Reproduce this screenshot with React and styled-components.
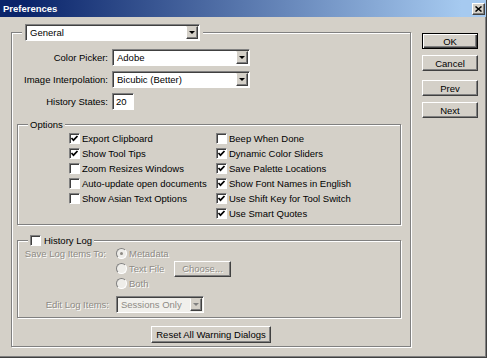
import React from 'react';
import styled, { createGlobalStyle, css } from 'styled-components';

const GlobalStyle = createGlobalStyle`
  html, body {
    margin: 0;
    padding: 0;
    background: #d4d0c8;
  }
  body {
    font-family: "Liberation Sans", Arial, sans-serif;
    font-size: 9.5px;
    color: #000;
  }
`;

const disabledText = css`
  color: #8e8b85;
  text-shadow: 1px 1px 0 #fff;
`;

const Window = styled.div`
  width: 487px;
  height: 358px;
  box-sizing: border-box;
  display: flex;
  flex-direction: column;
  background: #d4d0c8;
  border-right: 1px solid #404040;
  border-bottom: 1px solid #404040;
  box-shadow: inset -1px -1px #808080;
`;

const TitleBar = styled.div`
  height: 17px;
  flex: none;
  display: flex;
  align-items: center;
  justify-content: space-between;
  padding: 0 1px 0 3px;
  background: linear-gradient(to right, #0a246a 5%, #a6caf0 95%);
  color: #fff;
  font-weight: bold;
`;

const CloseButton = styled.div`
  width: 13px;
  height: 12px;
  box-sizing: border-box;
  display: flex;
  align-items: center;
  justify-content: center;
  background: #d4d0c8;
  border: 1px solid;
  border-color: #fff #404040 #404040 #fff;
  box-shadow: inset -1px -1px #808080;
`;

const Body = styled.div`
  display: flex;
  align-items: flex-start;
  padding: 15px 0 0 11px;
`;

const Group = styled.div`
  display: flex;
  flex-direction: column;
  box-sizing: border-box;
  border: 1px solid #808080;
  box-shadow: inset 1px 1px #fff, 1px 1px #fff;
  width: ${p => (p.$w ? `${p.$w}px` : 'auto')};
  margin: ${p => p.$margin || 0};
  padding-bottom: ${p => p.$pb || 0}px;
`;

const Legend = styled.div`
  align-self: flex-start;
  display: flex;
  align-items: center;
  gap: 3px;
  margin: ${p => p.$top}px 0 0 10px;
  padding: 0 ${p => p.$pad}px;
  line-height: 13px;
  background: #d4d0c8;
`;

const FormGrid = styled.div`
  display: grid;
  grid-template-columns: 100px auto;
  grid-auto-rows: 17px;
  row-gap: 5px;
  align-items: center;
  margin-top: 8px;
`;

const FieldLabel = styled.div`
  text-align: right;
  padding-right: ${p => p.$pr ?? 4}px;
  line-height: ${p => p.$lh || 13}px;
  white-space: nowrap;
  ${p => p.$disabled && disabledText}
`;

const SelectBox = styled.div`
  display: flex;
  align-items: center;
  width: ${p => p.$w}px;
  height: 17px;
  box-sizing: border-box;
  border: 1px solid;
  border-color: #808080 #fff #fff #808080;
  box-shadow: inset 1px 1px #404040;
  background: ${p => (p.$disabled ? '#f1f0ec' : '#fff')};
  padding: 1px 1px 1px 4px;
`;

const SelectText = styled.span`
  flex: 1;
  white-space: nowrap;
  ${p => p.$disabled && css`color: #8e8b85;`}
`;

const DropButton = styled.div`
  width: 12px;
  height: 13px;
  box-sizing: border-box;
  display: flex;
  align-items: center;
  justify-content: center;
  background: #d4d0c8;
  border: 1px solid;
  border-color: #d4d0c8 #404040 #404040 #fff;
  box-shadow: inset -1px -1px #808080;
`;

const Arrow = styled.span`
  width: 0;
  height: 0;
  border-left: 3px solid transparent;
  border-right: 3px solid transparent;
  border-top: 3px solid ${p => (p.$disabled ? '#808080' : '#000')};
`;

const TextInput = styled.div`
  width: 22px;
  height: 17px;
  box-sizing: border-box;
  display: flex;
  align-items: center;
  padding-left: 3px;
  border: 1px solid;
  border-color: #808080 #fff #fff #808080;
  box-shadow: inset 1px 1px #404040;
  background: #fff;
`;

const Columns = styled.div`
  display: flex;
  padding-left: 51px;
`;

const CheckColumn = styled.div`
  display: flex;
  flex-direction: column;
  width: ${p => (p.$w ? `${p.$w}px` : 'auto')};
`;

const CheckRow = styled.div`
  display: flex;
  align-items: center;
  gap: 2px;
  height: 15px;
  white-space: nowrap;
`;

const Box = styled.span`
  flex: none;
  width: 11px;
  height: 11px;
  box-sizing: border-box;
  display: flex;
  align-items: center;
  justify-content: center;
  border: 1px solid;
  border-color: #808080 #fff #fff #808080;
  box-shadow: inset 1px 1px #404040;
  background: #fff;
`;

const RadioCircle = styled.span`
  flex: none;
  width: 11px;
  height: 11px;
  box-sizing: border-box;
  display: flex;
  align-items: center;
  justify-content: center;
  border-radius: 50%;
  border: 1px solid;
  border-color: #808080 #fff #fff #808080;
  background: #eeede9;
`;

const Dot = styled.span`
  width: 3px;
  height: 3px;
  border-radius: 50%;
  background: #8e8b85;
`;

const HistoryGrid = styled.div`
  display: grid;
  grid-template-columns: 98px auto;
  row-gap: 5px;
  margin-top: -1px;
`;

const RadioList = styled.div`
  display: flex;
  flex-direction: column;
`;

const RadioRow = styled.div`
  display: flex;
  align-items: center;
  height: 15px;
`;

const RadioItem = styled.div`
  display: flex;
  align-items: center;
  gap: 2px;
  width: ${p => (p.$w ? `${p.$w}px` : 'auto')};
  white-space: nowrap;
  ${disabledText}
`;

const Button = styled.button`
  width: ${p => p.$w || 56}px;
  height: ${p => p.$h || 16}px;
  box-sizing: border-box;
  padding: 0;
  font: inherit;
  color: #000;
  background: #d4d0c8;
  border: 1px solid;
  border-color: #fff #404040 #404040 #fff;
  box-shadow: inset -1px -1px #808080;
  margin-top: ${p => p.$mt || 0}px;
  ${p =>
    p.$default &&
    css`
      border-color: #000;
      box-shadow: inset 1px 1px #fff, inset -1px -1px #404040, inset -2px -2px #808080;
    `}
  &:disabled {
    ${disabledText}
  }
`;

const ResetButton = styled(Button)`
  align-self: center;
  margin-top: 8px;
`;

const ButtonColumn = styled.div`
  display: flex;
  flex-direction: column;
  gap: 6px;
  margin: 1px 0 0 11px;
`;

const Select = ({ width, value, disabled }) => (
  <SelectBox $w={width} $disabled={disabled}>
    <SelectText $disabled={disabled}>{value}</SelectText>
    <DropButton>
      <Arrow $disabled={disabled} />
    </DropButton>
  </SelectBox>
);

const Checkbox = ({ checked, children }) => (
  <CheckRow>
    <Box>
      {checked && (
        <svg width="9" height="9" viewBox="0 0 9 9">
          <path d="M1.5 4 L3.5 6.2 L7.5 2" fill="none" stroke="#000" strokeWidth="1.7" />
        </svg>
      )}
    </Box>
    {children}
  </CheckRow>
);

const Radio = ({ checked, width, children }) => (
  <RadioItem $w={width}>
    <RadioCircle>{checked && <Dot />}</RadioCircle>
    {children}
  </RadioItem>
);

const leftOptions = [
  ['Export Clipboard', true],
  ['Show Tool Tips', true],
  ['Zoom Resizes Windows', false],
  ['Auto-update open documents', false],
  ['Show Asian Text Options', false]
];

const rightOptions = [
  ['Beep When Done', false],
  ['Dynamic Color Sliders', true],
  ['Save Palette Locations', true],
  ['Show Font Names in English', true],
  ['Use Shift Key for Tool Switch', true],
  ['Use Smart Quotes', true]
];

const App = () => (
  <>
    <GlobalStyle />
    <Window>
      <TitleBar>
        <span>Preferences</span>
        <CloseButton>
          <svg width="7" height="6" viewBox="0 0 7 6">
            <path d="M0.5 0.5 L6.5 5.5 M6.5 0.5 L0.5 5.5" stroke="#000" strokeWidth="1.5" />
          </svg>
        </CloseButton>
      </TitleBar>
      <Body>
        <Group $w={400} $pb={3}>
          <Legend $top={-9} $pad={3}>
            <Select width={175} value="General" />
          </Legend>
          <FormGrid>
            <FieldLabel>Color Picker:</FieldLabel>
            <Select width={138} value="Adobe" />
            <FieldLabel>Image Interpolation:</FieldLabel>
            <Select width={138} value="Bicubic (Better)" />
            <FieldLabel>History States:</FieldLabel>
            <TextInput>20</TextInput>
          </FormGrid>

          <Group $margin="14px 9px 0 5px" $pb={3}>
            <Legend $top={-7} $pad={2}>Options</Legend>
            <Columns>
              <CheckColumn $w={147}>
                {leftOptions.map(([label, on]) => (
                  <Checkbox key={label} checked={on}>{label}</Checkbox>
                ))}
              </CheckColumn>
              <CheckColumn>
                {rightOptions.map(([label, on]) => (
                  <Checkbox key={label} checked={on}>{label}</Checkbox>
                ))}
              </CheckColumn>
            </Columns>
          </Group>

          <Group $margin="15px 9px 0 5px" $pb={4}>
            <Legend $top={-7} $pad={2}>
              <Box />
              History Log
            </Legend>
            <HistoryGrid>
              <FieldLabel $disabled $pr={10} $lh={15}>Save Log Items To:</FieldLabel>
              <RadioList>
                <RadioRow>
                  <Radio checked>Metadata</Radio>
                </RadioRow>
                <RadioRow>
                  <Radio width={58}>Text File</Radio>
                  <Button $w={57} disabled>Choose...</Button>
                </RadioRow>
                <RadioRow>
                  <Radio>Both</Radio>
                </RadioRow>
              </RadioList>
              <FieldLabel $disabled $pr={7} $lh={17}>Edit Log Items:</FieldLabel>
              <Select width={88} value="Sessions Only" disabled />
            </HistoryGrid>
          </Group>

          <ResetButton $w={120} $h={17}>Reset All Warning Dialogs</ResetButton>
        </Group>

        <ButtonColumn>
          <Button $default>OK</Button>
          <Button>Cancel</Button>
          <Button $mt={3}>Prev</Button>
          <Button>Next</Button>
        </ButtonColumn>
      </Body>
    </Window>
  </>
);

export default App;
